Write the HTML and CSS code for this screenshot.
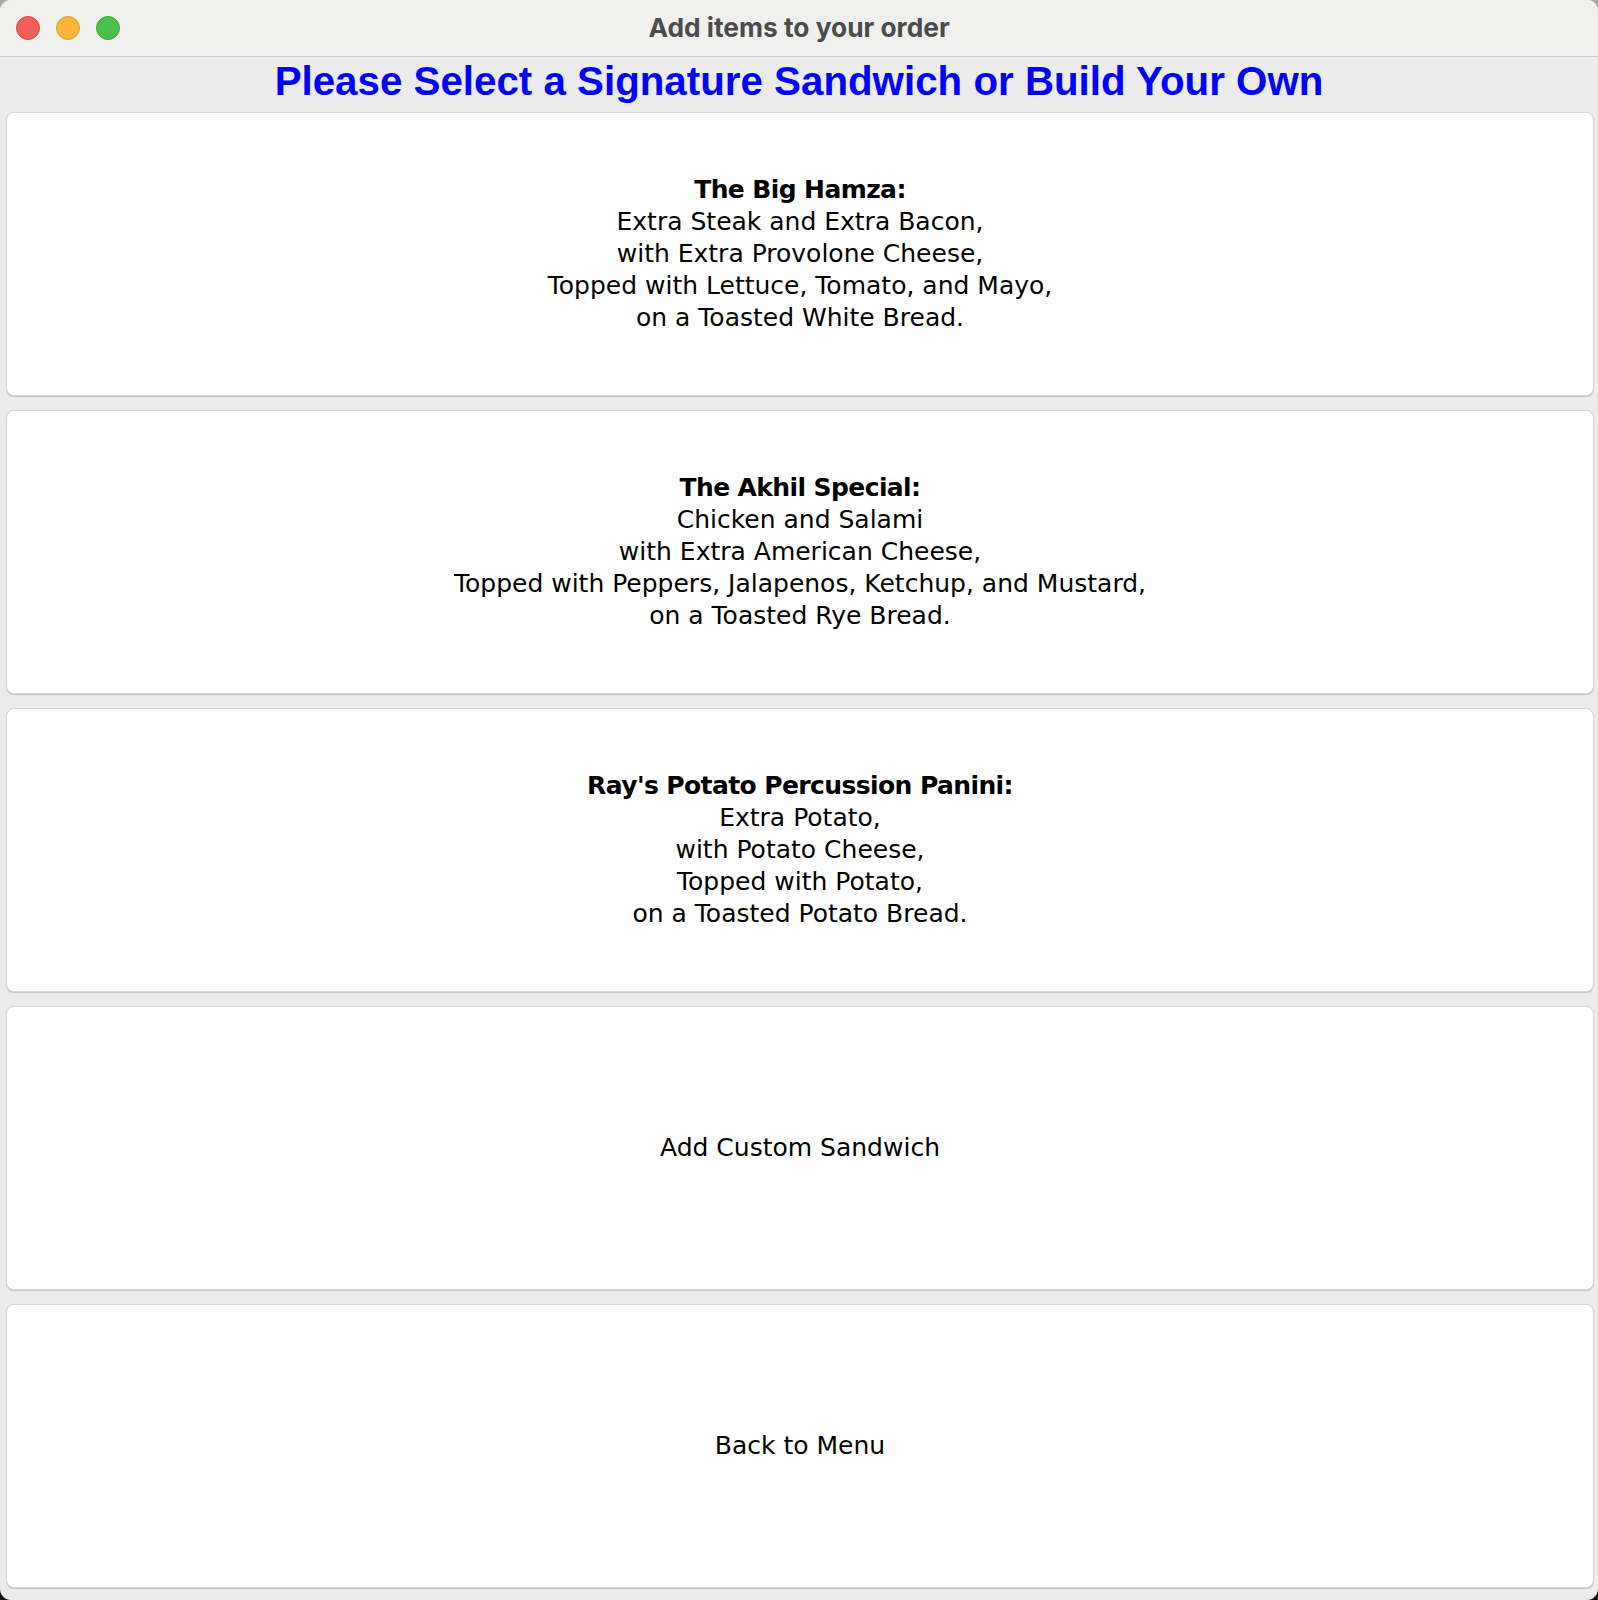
FILE: index.html
```html
<!DOCTYPE html>
<html>
<head>
<meta charset="utf-8">
<link rel="stylesheet" href="styles.css">
<title>Add items to your order</title>
</head>
<body>
<div class="window">
  <div class="titlebar">
    <div class="lights">
      <span class="light red"></span>
      <span class="light yellow"></span>
      <span class="light green"></span>
    </div>
    <div class="wintitle">Add items to your order</div>
  </div>
  <h1 class="heading">Please Select a Signature Sandwich or Build Your Own</h1>
  <div class="cards">
    <div class="card">
      <div class="card-text">
        <b>The Big Hamza:</b><br>
        Extra Steak and Extra Bacon,<br>
        with Extra Provolone Cheese,<br>
        Topped with Lettuce, Tomato, and Mayo,<br>
        on a Toasted White Bread.
      </div>
    </div>
    <div class="card">
      <div class="card-text">
        <b>The Akhil Special:</b><br>
        Chicken and Salami<br>
        with Extra American Cheese,<br>
        Topped with Peppers, Jalapenos, Ketchup, and Mustard,<br>
        on a Toasted Rye Bread.
      </div>
    </div>
    <div class="card">
      <div class="card-text">
        <b>Ray's Potato Percussion Panini:</b><br>
        Extra Potato,<br>
        with Potato Cheese,<br>
        Topped with Potato,<br>
        on a Toasted Potato Bread.
      </div>
    </div>
    <div class="card">
      <div class="card-text">Add Custom Sandwich</div>
    </div>
    <div class="card">
      <div class="card-text">Back to Menu</div>
    </div>
  </div>
</div>
</body>
</html>
```

FILE: styles.css
```css
html, body {
  margin: 0;
  padding: 0;
}
body {
  background: linear-gradient(#a9aaa4 0, #a9aaa4 40px, #111 1560px);
  width: 1598px;
  height: 1600px;
  overflow: hidden;
}
.window {
  width: 1598px;
  height: 1600px;
  border-radius: 11px;
  background: #ececec;
  overflow: hidden;
  display: flex;
  flex-direction: column;
}
.titlebar {
  height: 56px;
  flex: none;
  background: #f0f0ef;
  border-bottom: 1px solid #cbcbcb;
  display: grid;
  align-items: center;
}
.lights {
  grid-area: 1 / 1;
  justify-self: start;
  display: flex;
  gap: 16px;
  padding-left: 16px;
  padding-bottom: 1px;
}
.light {
  width: 24px;
  height: 24px;
  border-radius: 50%;
  box-sizing: border-box;
}
.red { background: #f25f57; border: 1px solid #e0483f; }
.yellow { background: #fbb43a; border: 1px solid #e19d2a; }
.green { background: #4ac04b; border: 1px solid #3aa93b; }
.wintitle {
  grid-area: 1 / 1;
  justify-self: center;
  font-family: Inter, "Liberation Sans", sans-serif;
  font-weight: 700;
  font-size: 26.3px;
  color: #4b4b4b;
  padding-bottom: 2px;
}
.heading {
  margin: 0;
  height: 55px;
  flex: none;
  box-sizing: border-box;
  text-align: center;
  font-family: "Liberation Sans", Arial, sans-serif;
  font-weight: 700;
  font-size: 40.3px;
  line-height: 46px;
  padding-top: 2px;
  color: #0000ff;
}
.cards {
  display: flex;
  flex-direction: column;
  gap: 14px;
  padding: 0 4px 0 6px;
}
.card {
  height: 284px;
  box-sizing: border-box;
  background: #fff;
  border: 1px solid #d6d6d6;
  border-radius: 8px;
  box-shadow: 0 1px 1px rgba(0, 0, 0, 0.18);
  display: flex;
  align-items: center;
  justify-content: center;
}
.card-text {
  font-family: "DejaVu Sans", "Lucida Grande", sans-serif;
  font-size: 25px;
  line-height: 32px;
  color: #000;
  text-align: center;
}
.card-text b {
  font-weight: 700;
  letter-spacing: -0.6px;
}
```
